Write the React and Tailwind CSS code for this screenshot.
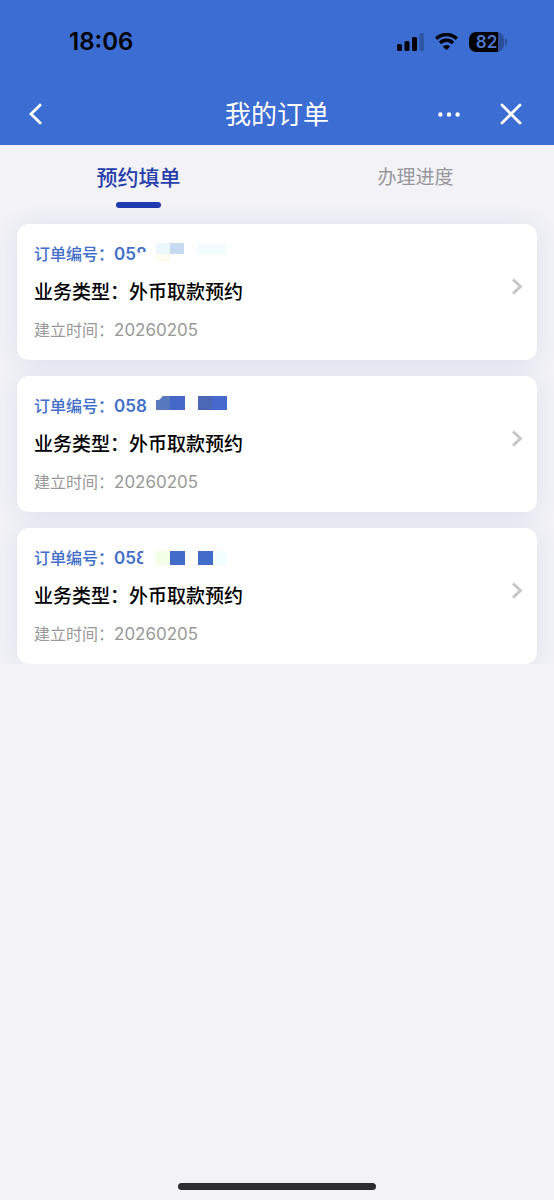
import React, { useState } from "react";

const orders = [
  {
    id: "058",
    kind: "业务类型：外币取款预约",
    created: "20260205",
    cover: "M22 12l3 -1l2 -1l4 0l1 2h3v13h-13z",
    mosaic: [
      { x: 42, y: 1, w: 14, h: 11, fill: "#edf5fd" },
      { x: 56, y: 1, w: 14, h: 11, fill: "#c6daf2" },
      { x: 42, y: 12, w: 14, h: 8, fill: "#fdfcf3" },
      { x: 84, y: 1, w: 29, h: 11, fill: "#f4fcff" },
    ],
  },
  {
    id: "058",
    kind: "业务类型：外币取款预约",
    created: "20260205",
    cover: "M33 0h6v24h-6z",
    mosaic: [
      { d: "M42 6h3l4 -4h7v14h-14z", fill: "#5879bd" },
      { x: 56, y: 2, w: 15, h: 14, fill: "#4669c9" },
      { x: 84, y: 2, w: 14, h: 14, fill: "#4b68b5" },
      { x: 98, y: 2, w: 15, h: 14, fill: "#4569cd" },
    ],
  },
  {
    id: "058",
    kind: "业务类型：外币取款预约",
    created: "20260205",
    cover: "M30 0l-1 9l-2 3l2 3l1 9h8v-24z",
    mosaic: [
      { x: 42, y: 5, w: 14, h: 14, fill: "#f4ffe8" },
      { x: 56, y: 5, w: 15, h: 14, fill: "#426cc9" },
      { x: 84, y: 5, w: 15, h: 14, fill: "#426cc9" },
      { x: 99, y: 5, w: 14, h: 14, fill: "#f2feff" },
    ],
  },
];

function StatusBar() {
  return (
    <div className="flex h-[83px] items-center justify-between pr-[46px] pl-[69px] text-black">
      <time className="text-2xl leading-8 font-semibold">18:06</time>
      <div className="flex items-center gap-[11px]">
        <svg width="27" height="18" viewBox="0 0 27 18" aria-label="信号">
          <rect x="0" y="11" width="5" height="7" rx="1.5" />
          <rect x="7.5" y="8" width="5" height="10" rx="1.5" />
          <rect x="15" y="4" width="5" height="14" rx="1.5" />
          <rect x="22.5" y="0" width="4.5" height="18" rx="1.5" fill="#2c57a5" />
        </svg>
        <svg width="23" height="17" viewBox="0 0 23 17" aria-label="无线网络">
          <g fill="none" stroke="#000" strokeWidth="3.4">
            <path d="M1.2 5.8a14.6 14.6 0 0 1 20.6 0" />
            <path d="M5 10a9.2 9.2 0 0 1 13 0" />
          </g>
          <path d="M11.5 17L7.8 13.4a5.3 5.3 0 0 1 7.4 0z" />
        </svg>
        <div className="flex items-center gap-px">
          <span className="flex h-5 w-[35px] items-center justify-center rounded-[7px] bg-[linear-gradient(90deg,#000_84%,#2b4f9c_84%)] text-[17px] leading-5 font-semibold text-[#4f78d0]">
            82
          </span>
          <svg width="3" height="8" viewBox="0 0 3 8" aria-hidden="true">
            <path d="M0 0q5 4 0 8z" fill="#2b4f9c" />
          </svg>
        </div>
      </div>
    </div>
  );
}

function NavBar() {
  return (
    <div className="grid h-[62px] grid-cols-3 items-center px-7 text-white">
      <button type="button" aria-label="返回" className="w-4">
        <svg width="16" height="22" viewBox="0 0 16 22" fill="none" stroke="currentColor" strokeWidth="2.8">
          <path d="M13 1.3L3 11L13 20.7" />
        </svg>
      </button>
      <h1 className="pt-0.5 text-center text-[26px] leading-9 font-normal">我的订单</h1>
      <div className="flex items-center justify-end gap-10 pr-1">
        <button type="button" aria-label="更多">
          <svg width="22" height="22" viewBox="0 0 22 22" fill="currentColor">
            <circle cx="2.4" cy="11.5" r="2.2" />
            <circle cx="11" cy="11.5" r="2.2" />
            <circle cx="19.6" cy="11.5" r="2.2" />
          </svg>
        </button>
        <button type="button" aria-label="关闭">
          <svg width="22" height="22" viewBox="0 0 22 22" stroke="currentColor" strokeWidth="2.8" strokeLinecap="round">
            <path d="M2 2L20 20M20 2L2 20" />
          </svg>
        </button>
      </div>
    </div>
  );
}

function OrderCard({ order }) {
  return (
    <li className="rounded-xl bg-white shadow-[0_2px_24px_rgba(70,110,170,0.12)]">
      <a href="#order" className="flex items-start justify-between py-[18px] pr-3.5 pl-[17px]">
        <div className="flex flex-col gap-3">
          <p className="flex text-base leading-6 font-medium text-[#426fc9]">
            <span>订单编号：</span>
            <span className="relative font-semibold">
              <span className="text-[17px]">{order.id}</span>
              <svg className="absolute top-0 left-0" width="114" height="24" viewBox="0 0 114 24" aria-hidden="true">
                <path d={order.cover} fill="#fff" />
                {order.mosaic.map((m, i) =>
                  m.d ? (
                    <path key={i} d={m.d} fill={m.fill} />
                  ) : (
                    <rect key={i} x={m.x} y={m.y} width={m.w} height={m.h} fill={m.fill} />
                  )
                )}
              </svg>
            </span>
          </p>
          <p className="pt-0.5 text-[19px] leading-[26px] font-medium text-black">{order.kind}</p>
          <p className="flex text-base leading-6 text-[#999]">
            <span>建立时间：</span>
            <span className="text-[17px]">{order.created}</span>
          </p>
        </div>
        <svg className="mt-9" width="12" height="18" viewBox="0 0 12 18" fill="none" stroke="#c7c7c7" strokeWidth="3" aria-hidden="true">
          <path d="M2 1.5L9.5 8.5L2 15.5" />
        </svg>
      </a>
    </li>
  );
}

export default function App() {
  const [tab, setTab] = useState(0);
  return (
    <div className="flex min-h-screen flex-col bg-[#f2f2f7] font-['Inter','Noto_Sans_CJK_SC',sans-serif]">
      <header className="bg-[#3c6dd2]">
        <StatusBar />
        <NavBar />
      </header>
      <main className="flex-1">
        <div className="overflow-hidden">
          <div role="tablist" className="grid grid-cols-2 pb-4">
            {["预约填单", "办理进度"].map((label, i) => (
              <button
                key={label}
                type="button"
                role="tab"
                aria-selected={tab === i}
                onClick={() => setTab(i)}
                className="flex h-[63px] flex-col items-center justify-between pt-[17px]"
              >
                <span
                  className={
                    tab === i
                      ? "text-[21px] leading-8 font-medium text-[#263eaa]"
                      : "text-[19px] leading-8 text-[#96969b]"
                  }
                >
                  {label}
                </span>
                {tab === i && <span className="h-1.5 w-[45px] rounded-full bg-[#213cb0]" />}
              </button>
            ))}
          </div>
          <ul className="flex flex-col gap-4 px-[17px]">
            {orders.map((order, i) => (
              <OrderCard key={i} order={order} />
            ))}
          </ul>
        </div>
      </main>
      <footer className="flex justify-center pb-2.5">
        <span className="h-[7px] w-[198px] rounded-full bg-[#2c2c2f]" />
      </footer>
    </div>
  );
}
